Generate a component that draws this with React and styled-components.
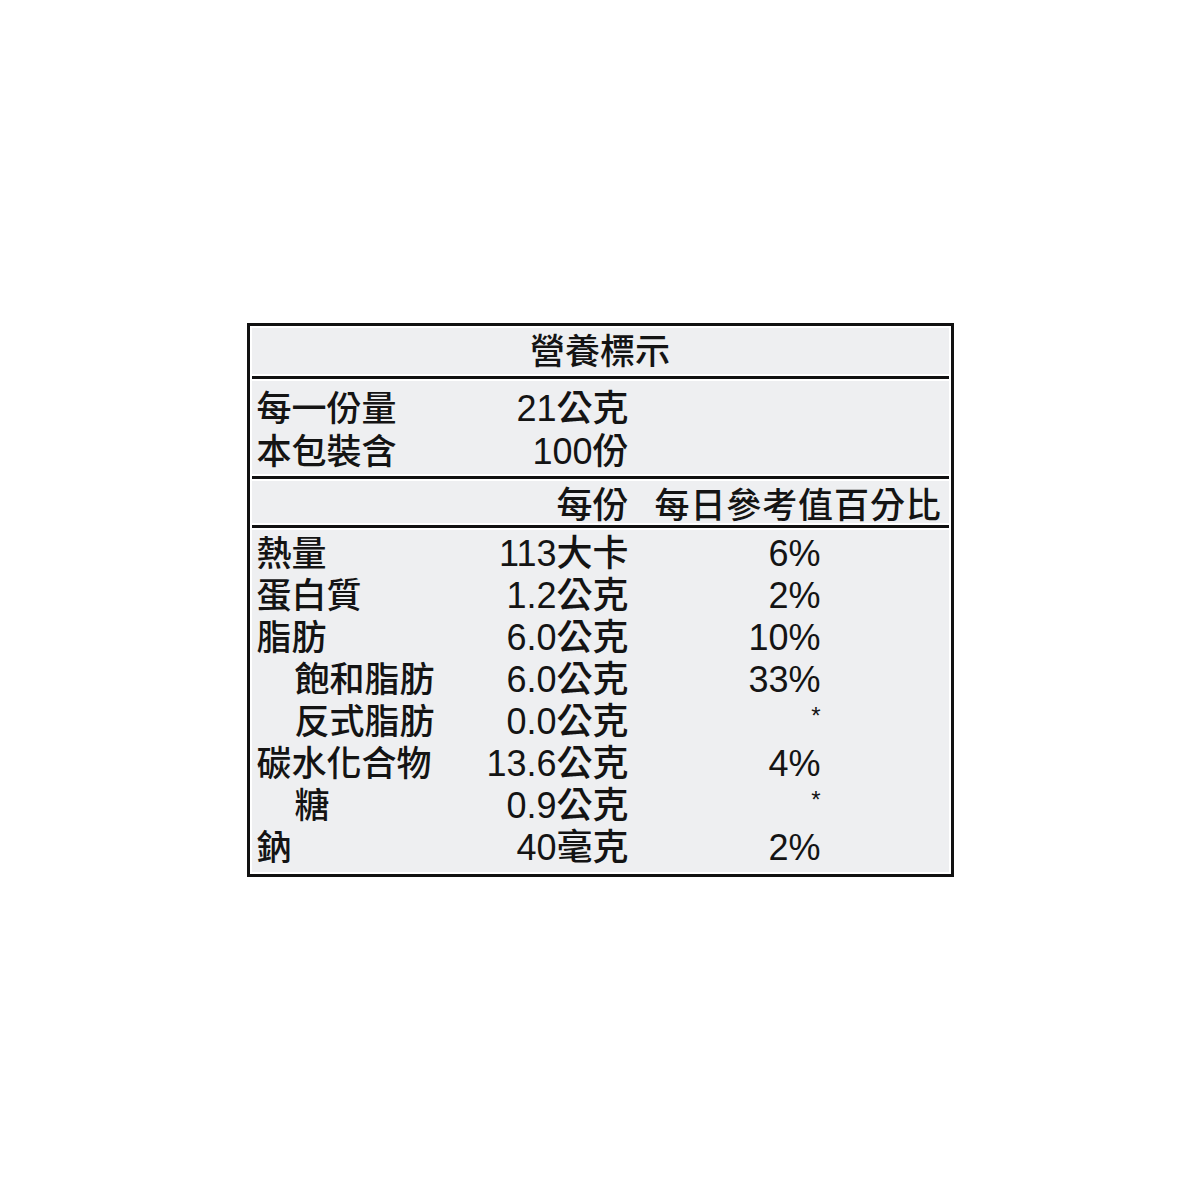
import React from "react";
import styled, { createGlobalStyle } from "styled-components";

const Global = createGlobalStyle`
  html, body { margin: 0; padding: 0; background: #ffffff; }
  body { font-family: "Liberation Sans", "Noto Sans CJK TC", sans-serif; }
`;

const Page = styled.div`
  width: 1200px;
  height: 1200px;
  display: flex;
  align-items: center;
  justify-content: center;
  background: #ffffff;
`;

const Label = styled.div`
  box-sizing: border-box;
  width: 707px;
  height: 554px;
  border: 3px solid #111;
  padding: 2px;
  background: #ffffff;
  display: flex;
  flex-direction: column;
  color: #141414;
  font-family: "Liberation Sans", "Noto Sans CJK TC", sans-serif;
  font-size: 35px;
  font-weight: 500;
`;

const Divider = styled.div`
  height: 3px;
  background: #111;
  margin: 2px 0;
  flex: none;
`;

const Section = styled.div`
  background: #eeeff1;
  height: ${(p) => p.$h}px;
  box-sizing: border-box;
  padding-top: ${(p) => p.$pt || 0}px;
  flex: none;
`;

const Title = styled.div`
  box-sizing: border-box;
  height: 100%;
  padding-bottom: 5px;
  display: flex;
  align-items: center;
  justify-content: center;
`;

const Row = styled.div`
  display: grid;
  grid-template-columns: 200px 172px 192px 1fr;
  height: ${(p) => p.$h}px;
  line-height: ${(p) => p.$h}px;
  padding-left: 5px;
  white-space: nowrap;
`;

const Name = styled.div`
  padding-left: ${(p) => (p.$indent ? 38 : 0)}px;
`;

const Value = styled.div`
  text-align: right;
  font-size: 36px;
`;

const Percent = styled.div`
  text-align: right;
  font-size: 36px;
`;

const HeaderWide = styled.div`
  grid-column: 3 / span 2;
  padding-left: 26px;
  letter-spacing: 0.9px;
`;

const Star = styled.span`
  font-size: 24px;
  position: relative;
  top: -10px;
`;

const rows = [
  { name: "熱量", value: "113大卡", pct: "6%" },
  { name: "蛋白質", value: "1.2公克", pct: "2%" },
  { name: "脂肪", value: "6.0公克", pct: "10%" },
  { name: "飽和脂肪", value: "6.0公克", pct: "33%", indent: true },
  { name: "反式脂肪", value: "0.0公克", pct: "*", indent: true },
  { name: "碳水化合物", value: "13.6公克", pct: "4%" },
  { name: "糖", value: "0.9公克", pct: "*", indent: true },
  { name: "鈉", value: "40毫克", pct: "2%" },
];

export default function App() {
  return (
    <>
      <Global />
      <Page>
        <Label>
          <Section $h={46}>
            <Title>營養標示</Title>
          </Section>
          <Divider />
          <Section $h={93} $pt={6}>
            <Row $h={43}>
              <Name>每一份量</Name>
              <Value>21公克</Value>
            </Row>
            <Row $h={43}>
              <Name>本包裝含</Name>
              <Value>100份</Value>
            </Row>
          </Section>
          <Divider />
          <Section $h={42} $pt={8}>
            <Row $h={34}>
              <Name />
              <Value>每份</Value>
              <HeaderWide>每日參考值百分比</HeaderWide>
            </Row>
          </Section>
          <Divider />
          <Section $h={342} $pt={3}>
            {rows.map((r) => (
              <Row key={r.name} $h={42}>
                <Name $indent={r.indent}>{r.name}</Name>
                <Value>{r.value}</Value>
                <Percent>{r.pct === "*" ? <Star>*</Star> : r.pct}</Percent>
              </Row>
            ))}
          </Section>
        </Label>
      </Page>
    </>
  );
}
